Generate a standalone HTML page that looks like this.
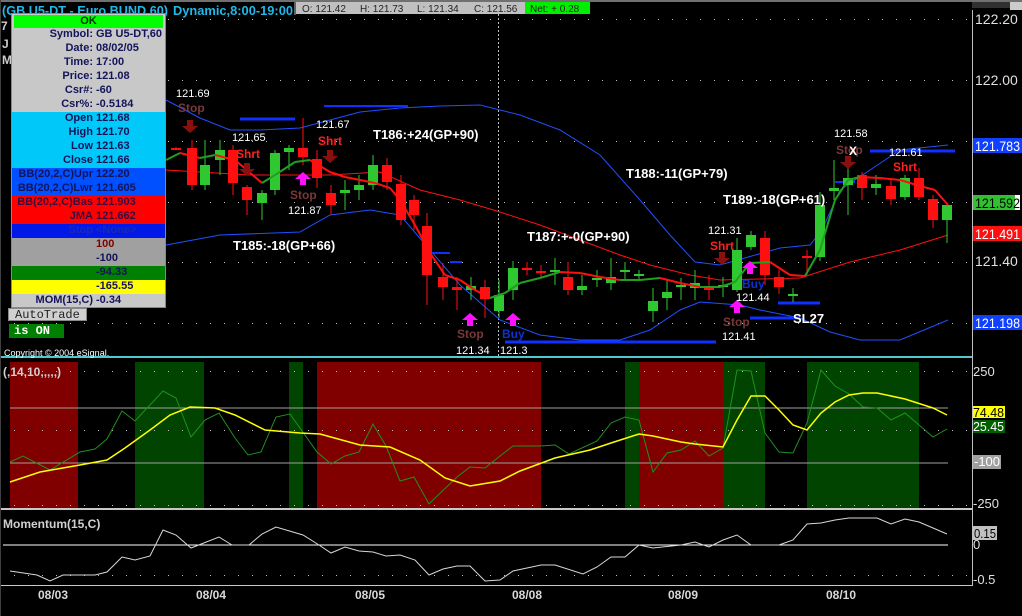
<!DOCTYPE html>
<html><head><meta charset="utf-8"><style>
html,body{margin:0;padding:0;background:#000;width:1022px;height:616px;overflow:hidden}
svg{display:block}
text{font-family:"Liberation Sans",sans-serif}
#panel{position:absolute;left:11px;top:13px;width:155px;height:295px;background:#c8c8c8;border:1px solid #888;box-sizing:border-box}
#panel div{height:14px;line-height:14px;font:bold 11px "Liberation Sans",sans-serif;color:#14145a;white-space:nowrap;position:relative}
#panel span.l{position:absolute;right:72px}
#panel span.v{position:absolute;left:84px}
</style></head><body>
<div style="position:relative;width:1022px;height:616px">
<svg id="s" width="1022" height="616" xmlns="http://www.w3.org/2000/svg"></svg>
<div id="panel">
<div style="background:#00ff00;color:#003000;text-align:center;margin:1px 2px 0 2px;height:13px;line-height:13px">OK</div>
<div><span class="l">Symbol:</span><span class="v">GB U5-DT,60</span></div>
<div><span class="l">Date:</span><span class="v">08/02/05</span></div>
<div><span class="l">Time:</span><span class="v">17:00</span></div>
<div><span class="l">Price:</span><span class="v">121.08</span></div>
<div><span class="l">Csr#:</span><span class="v">-60</span></div>
<div><span class="l">Csr%:</span><span class="v">-0.5184</span></div>
<div style="background:#00c8f8"><span class="l">Open</span><span class="v">121.68</span></div>
<div style="background:#00c8f8"><span class="l">High</span><span class="v">121.70</span></div>
<div style="background:#00c8f8"><span class="l">Low</span><span class="v">121.63</span></div>
<div style="background:#00c8f8"><span class="l">Close</span><span class="v">121.66</span></div>
<div style="background:#0050ff"><span class="l">BB(20,2,C)Upr</span><span class="v">122.20</span></div>
<div style="background:#0050ff"><span class="l">BB(20,2,C)Lwr</span><span class="v">121.605</span></div>
<div style="background:#ff0000;color:#3a0a40"><span class="l">BB(20,2,C)Bas</span><span class="v">121.903</span></div>
<div style="background:#ff0000;color:#3a0a40"><span class="l">JMA</span><span class="v">121.662</span></div>
<div style="background:#0018e8;color:#1a2ab0"><span class="l">Stop</span><span class="v">&lt;None&gt;</span></div>
<div style="background:#a0a0a0;color:#800000"><span class="v">100</span></div>
<div style="background:#a0a0a0"><span class="v">-100</span></div>
<div style="background:#008000"><span class="v">-94.33</span></div>
<div style="background:#ffff00"><span class="v">-165.55</span></div>
<div><span class="l">MOM(15,C)</span><span class="v">-0.34</span></div>
</div>
<div style="position:absolute;left:8px;top:308px;width:79px;height:13px;background:#d0d0d0;border:1px solid #888;box-sizing:border-box;font:12px 'Liberation Mono',monospace;line-height:12px;color:#222;padding-left:6px">AutoTrade</div>
<div style="position:absolute;left:9px;top:324px;width:55px;height:14px;background:#008000;font:bold 12px 'Liberation Mono',monospace;line-height:14px;color:#fff;padding-left:5px;box-sizing:border-box">is ON</div>
</div>
<script>
var o=[];
function P(a,c,w){var d='M'+a.map(function(p){return p[0]+','+p[1]}).join(' L');o.push('<path d="'+d+'" fill="none" stroke="'+c+'" stroke-width="'+(w||1)+'"/>');}
function R(x,y,w,h,c){o.push('<rect x="'+x+'" y="'+y+'" width="'+w+'" height="'+h+'" fill="'+c+'"/>');}
function T(x,y,t,c,s,b,tl){o.push('<text x="'+x+'" y="'+y+'" fill="'+c+'" font-size="'+s+'"'+(b?' font-weight="bold"':'')+(tl?' textLength="'+tl+'" lengthAdjust="spacingAndGlyphs"':'')+'>'+t+'</text>');}
function L(x1,y1,x2,y2,c,w){o.push('<line x1="'+x1+'" y1="'+y1+'" x2="'+x2+'" y2="'+y2+'" stroke="'+c+'" stroke-width="'+(w||1)+'"/>');}
R(0,0,1022,2,'#707070');
[[10,78,'#800000'],[135,204,'#004400'],[289,303,'#004400'],[317,541,'#800000'],[625,639,'#004400'],[639,723,'#800000'],[723,765,'#004400'],[807,919,'#004400']].forEach(function(r){R(r[0],362,r[1]-r[0],146,r[2]);});
[19,80,141,202,262,323,371,430,505,575].forEach(function(y){for(var x=14;x<970;x+=14)R(x,y,1,1,'#c0c0c0');});
for(var y=6;y<355;y+=4)R(498,y,1,2,'#c0c0c0');
R(0,356,972,2,'#50c8d0');R(0,508,972,2,'#c8c8c8');R(0,585,972,1,'#c8c8c8');
L(972.5,10,972.5,586,'#c0c0c0');L(0.5,0,0.5,616,'#404040');
L(10,408,948,408,'#a0a0a0');L(10,463,948,463,'#a0a0a0');L(3,545,948,545,'#fff');
P([[166,100],[200,118],[230,130],[260,130],[300,128],[330,120],[360,112],[400,108],[440,106],[480,105],[520,115],[560,130],[600,155],[640,200],[670,235],[695,262],[720,265],[780,248],[810,245],[822,230],[840,190],[870,170],[900,150],[948,145]],'#2050ff');
P([[166,245],[220,235],[300,232],[330,215],[370,210],[400,215],[430,250],[460,285],[500,320],[540,335],[580,340],[620,340],[650,330],[680,310],[700,302],[740,305],[760,310],[800,318],[830,332],[860,340],[900,340],[948,320]],'#2050ff');
P([[166,170],[250,175],[330,175],[380,172],[420,190],[460,200],[500,212],[540,225],[580,240],[620,255],[650,265],[690,275],[720,280],[760,279],[800,278],[850,262],[900,250],[948,235]],'#ff1010');
[[240,295,119,3],[324,408,106,2],[422,450,253,2],[450,462,262,2],[505,716,342,3],[778,820,303,3],[750,800,318,3],[870,955,151,3],[835,855,182,2],[680,715,342,2]].forEach(function(b){L(b[0],b[2],b[1],b[2],'#1030ff',b[3]);});
var C=[[176,148,149,147,150,0],[192,148,185,140,190,0],[205,165,185,140,190,1],[220,150,160,140,175,1],[233,150,183,145,195,0],[247,187,200,185,215,0],[262,193,203,190,220,1],[275,153,190,150,195,1],[289,148,152,145,170,1],[303,148,157,118,165,0],[317,159,178,150,188,0],[331,193,205,185,215,0],[345,190,193,180,210,1],[359,185,190,175,200,1],[373,165,185,155,190,1],[387,165,182,158,190,0],[401,184,220,175,225,0],[414,200,215,195,230,0],[427,226,275,213,305,0],[443,277,287,263,300,0],[457,287,290,277,310,0],[471,286,290,277,300,1],[485,287,299,280,318,0],[499,295,311,280,318,1],[513,268,290,261,300,1],[527,268,270,262,275,0],[541,271,273,265,278,0],[555,270,272,258,285,1],[568,277,290,262,295,0],[582,286,290,275,295,1],[597,278,280,270,287,1],[611,277,283,258,290,1],[625,270,272,262,280,1],[639,274,276,270,279,1],[653,301,311,288,322,1],[667,292,298,280,310,1],[681,285,287,278,300,1],[695,283,288,270,300,1],[709,286,290,275,300,0],[723,285,287,277,297,1],[737,250,290,238,292,1],[751,235,247,231,250,1],[765,238,275,231,285,0],[779,277,287,270,294,0],[793,294,296,288,302,1],[807,256,257,250,275,0],[820,205,257,192,261,1],[834,188,191,160,200,1],[848,178,185,161,215,1],[862,175,188,172,200,0],[876,184,188,175,195,1],[891,186,199,180,205,0],[905,178,197,175,200,1],[919,178,197,168,200,0],[933,199,220,195,228,0],[947,205,220,203,243,1]];
C.forEach(function(c){var col=c[5]?'#30c830':'#ff1010';L(c[0],c[3],c[0],c[4],col,1);R(c[0]-5,c[1],10,Math.max(2,c[2]-c[1]),col);});
var J=[[166,160],[180,153],[200,158],[215,155],[235,160],[262,183],[275,175],[295,162],[310,160],[330,172],[345,177],[360,180],[375,183],[390,188],[400,200],[415,225],[430,253],[445,275],[460,280],[475,290],[490,298],[505,293],[520,283],[540,278],[560,272],[580,273],[600,277],[620,280],[640,280],[660,278],[680,283],[700,287],[720,287],[735,282],[750,263],[770,262],[790,275],[805,276],[820,250],[835,200],[848,180],[860,177],[880,178],[900,180],[920,186],[935,190],[948,205]];
for(var i=1;i<J.length;i++){P([J[i-1],J[i]],J[i][1]<=J[i-1][1]?'#20a020':'#ff1010',2);}
function dn(x,y){o.push('<path d="M'+(x-3)+','+y+' h6 v6 h5 l-8,7 l-8,-7 h5z" fill="#8a1010"/>');}
function up(x,y){o.push('<path d="M'+x+','+y+' l8,7 h-5 v6 h-6 v-6 h-5z" fill="#ff10ff"/>');}
dn(190,120);dn(247,163);dn(330,150);dn(722,252);dn(848,156);
up(303,172);up(470,313);up(513,313);up(750,261);up(737,300);
var sc='#7a3838';
T(176,97,'121.69','#fff',11);T(178,112,'Stop',sc,12,1);
T(232,141,'121.65','#fff',11);T(236,158,'Shrt','#ff2020',12,1);
T(316,128,'121.67','#fff',11);T(318,145,'Shrt','#ff2020',12,1);
T(290,199,'Stop',sc,12,1);T(288,214,'121.87','#fff',11);
T(373,139,'T186:+24(GP+90)','#fff',13,1);T(233,250,'T185:-18(GP+66)','#fff',13,1);
T(626,178,'T188:-11(GP+79)','#fff',13,1);T(527,241,'T187:+-0(GP+90)','#fff',13,1);T(723,204,'T189:-18(GP+61)','#fff',13,1);
T(708,234,'121.31','#fff',11);T(710,250,'Shrt','#ff2020',12,1);
T(457,338,'Stop',sc,12,1);T(456,354,'121.34','#fff',11);T(502,338,'Buy','#1030d0',12,1);T(500,354,'121.3','#fff',11);
T(742,288,'Buy','#1030d0',12,1);T(736,301,'121.44','#fff',11);T(723,326,'Stop',sc,12,1);T(722,340,'121.41','#fff',11);
T(793,323,'SL27','#fff',13,1);
T(834,137,'121.58','#fff',11);T(836,154,'Stop',sc,12,1);T(849,155,'X','#fff',12,1);T(889,156,'121.61','#fff',11);T(893,171,'Shrt','#ff2020',12,1);
P([[10,462],[23,456],[50,470],[80,452],[95,449],[107,439],[122,411],[135,421],[163,391],[176,398],[191,437],[205,420],[219,413],[235,438],[248,455],[261,452],[276,417],[290,414],[317,452],[331,464],[345,456],[359,452],[373,424],[386,446],[400,481],[414,477],[429,504],[457,477],[470,467],[485,468],[500,456],[513,446],[541,446],[555,445],[569,454],[597,441],[611,423],[625,417],[639,420],[653,472],[667,453],[681,450],[695,441],[709,456],[723,448],[737,370],[751,371],[765,433],[779,452],[793,453],[807,423],[821,370],[835,386],[849,394],[863,407],[877,408],[891,420],[905,413],[919,425],[933,437],[947,429]],'#209020');
P([[10,482],[40,472],[80,465],[107,460],[125,448],[150,430],[170,415],[190,407],[215,408],[235,415],[265,430],[300,433],[320,434],[360,445],[390,447],[420,460],[445,478],[470,486],[500,481],[520,471],[555,458],[590,450],[611,443],[639,434],[653,436],[681,442],[695,444],[723,447],[737,420],[751,396],[765,396],[779,410],[793,425],[807,430],[821,413],[835,402],[849,395],[863,393],[877,393],[905,399],[933,408],[947,415]],'#ffff00',1.5);
P([[10,571],[37,575],[50,581],[63,575],[95,575],[107,572],[122,557],[135,560],[150,556],[163,530],[176,535],[191,548],[219,537],[232,545],[249,545],[262,534],[276,527],[303,535],[319,545],[331,553],[345,547],[359,551],[373,552],[386,556],[400,555],[415,560],[429,575],[443,569],[457,566],[470,566],[485,581],[500,580],[513,571],[541,565],[555,565],[583,574],[597,567],[611,557],[625,557],[639,545],[653,548],[681,545],[695,542],[709,547],[723,540],[737,535],[751,545],[765,545],[779,545],[793,540],[807,524],[821,523],[835,520],[849,518],[877,518],[891,524],[905,519],[919,522],[933,528],[947,534]],'#d8d8d8');
T(3,376,'(,14,10,,,,,)','#d0d0d0',12,1);T(3,528,'Momentum(15,C)','#d0d0d0',12,1);
T(4,356,'Copyright © 2004 eSignal.','#fff',9);
T(2,15,'(GB U5-DT - Euro BUND 60)','#20b8e8',13,1,166);T(173,15,'Dynamic,8:00-19:00','#20b8e8',13,1,120);
T(1,30,'7','#ccc',12,1);T(2,48,'J','#ccc',12,1);T(2,64,'M','#ccc',12,1);
R(296,2,229,12,'#c0c0c0');R(525,2,65,12,'#00ee00');R(294,2,2,13,'#606060');
T(302,12,'O: 121.42','#222',10);T(360,12,'H: 121.73','#222',10);T(417,12,'L: 121.34','#222',10);T(474,12,'C: 121.56','#222',10);T(530,12,'Net: + 0.28','#222',10);
R(972,2,50,6,'#303030');R(1010,2,12,8,'#ccc');
var ax='#e0e0e0';
T(975,24,'122.20',ax,14);T(975,85,'122.00',ax,14);T(975,266,'121.40',ax,14);
R(973,138,49,15,'#1040ff');T(975,151,'121.783','#fff',14,0,45);
R(973,195,42,15,'#30c030');R(1015,195,5,15,'#fff');T(975,208,'121.592','#000',14,0,45);
R(973,226,49,15,'#ff1010');T(975,239,'121.491','#fff',14,0,45);
R(973,315,49,15,'#1040ff');T(975,328,'121.198','#fff',14,0,45);
T(973,376,'250',ax,13);R(973,406,32,12,'#ffff00');T(973,417,'74.48','#000',13,0,31);
R(973,420,32,13,'#006000');T(973,431,'25.45','#fff',13,0,31);
R(973,455,28,14,'#a0a0a0');T(974,466,'-100','#fff',13);T(973,508,'-250',ax,13);
R(973,526,24,14,'#c0c0c0');T(974,538,'0.15','#000',13,0,22);T(973,549,'0',ax,13);T(973,584,'-0.5',ax,13);
[['08/03',38],['08/04',196],['08/05',355],['08/08',512],['08/09',668],['08/10',826]].forEach(function(d){T(d[1],599,d[0],'#d8d8d8',12,1);});
document.getElementById('s').innerHTML=o.join('');
</script>
</body></html>
